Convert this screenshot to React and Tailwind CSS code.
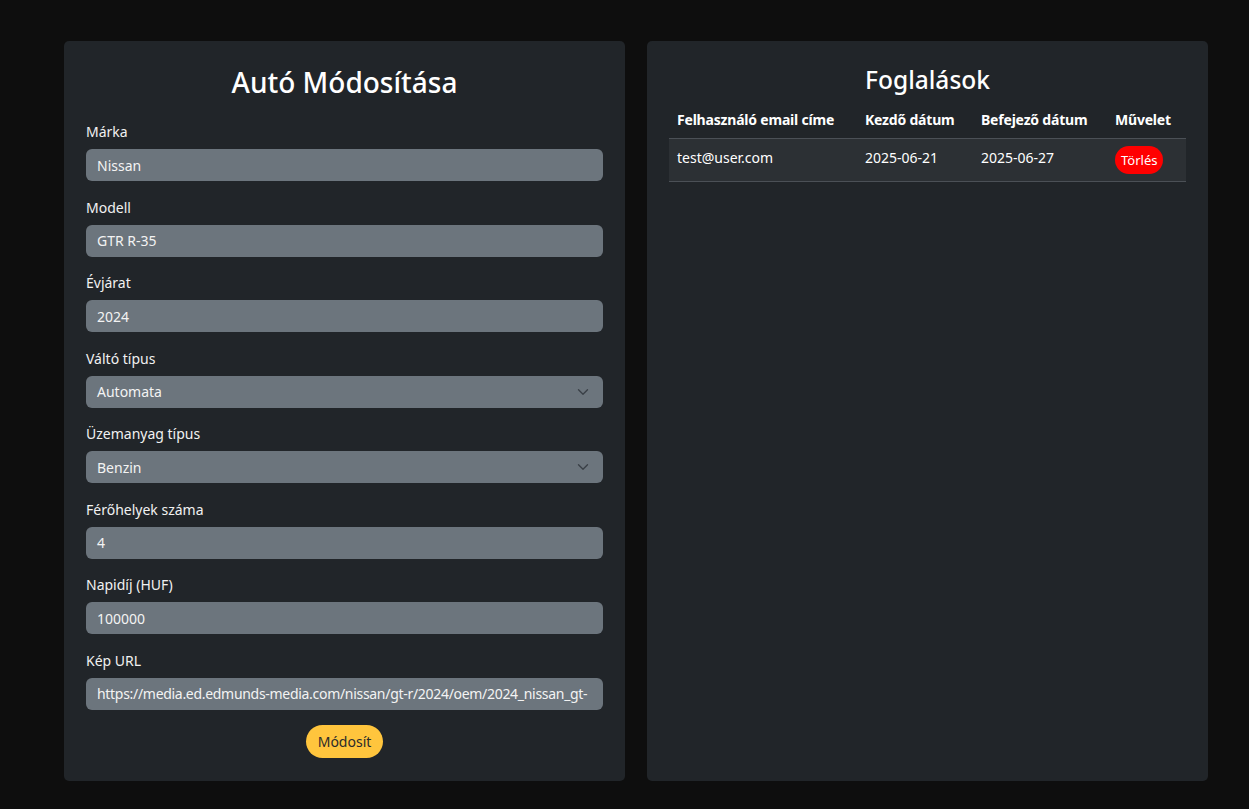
import React from 'react';

const fields = [
  { label: 'Márka', value: 'Nissan' },
  { label: 'Modell', value: 'GTR R-35' },
  { label: 'Évjárat', value: '2024' },
  { label: 'Váltó típus', value: 'Automata', select: true },
  { label: 'Üzemanyag típus', value: 'Benzin', select: true },
  { label: 'Férőhelyek száma', value: '4' },
  { label: 'Napidíj (HUF)', value: '100000' },
  { label: 'Kép URL', value: 'https://media.ed.edmunds-media.com/nissan/gt-r/2024/oem/2024_nissan_gt-', url: true },
];

const bookings = [
  { email: 'test@user.com', start: '2025-06-21', end: '2025-06-27' },
];

function Chevron() {
  return (
    <svg width="12" height="12" viewBox="0 0 16 16" fill="none" className="absolute right-[14px] top-1/2 -translate-y-1/2">
      <path d="M2 5l6 6 6-6" stroke="#3a4047" strokeWidth="1.8" strokeLinecap="round" strokeLinejoin="round" />
    </svg>
  );
}

function Field({ label, value, select, url }) {
  return (
    <div className="mb-[15.5px]">
      <label className="block text-[14px] leading-[21px] mb-[7px] text-[#f1f1f1]">{label}</label>
      <div className="relative">
        <div
          className={`h-[32px] rounded-[6px] bg-[#6c757d] pl-[11px] flex items-center text-[14px] text-[#f3f3f3] whitespace-nowrap overflow-hidden ${
            url ? 'pr-[8px] tracking-[-0.3px]' : 'pr-[36px]'
          }`}
        >
          {value}
        </div>
        {select && <Chevron />}
      </div>
    </div>
  );
}

export default function App() {
  return (
    <div className="min-h-[809px] bg-[#0e0e0e] pt-[41px] pl-[64px] flex gap-[22px] items-start" style={{ fontFamily: '"Noto Sans", "Open Sans", sans-serif' }}>
      {/* Edit car */}
      <div className="w-[561px] h-[740px] bg-[#212529] rounded-[5px] p-[22px] text-white">
        <h2 className="text-[28px] leading-[38px] font-medium text-center mb-[20px]">Autó Módosítása</h2>
        {fields.map(f => (
          <Field key={f.label} {...f} />
        ))}
        <div className="flex justify-center -mt-[0.5px]">
          <button className="h-[33px] px-[12px] rounded-full bg-[#ffc53d] text-[#2b2b2b] text-[14px]">Módosít</button>
        </div>
      </div>

      {/* Bookings */}
      <div className="w-[561px] h-[740px] bg-[#212529] rounded-[5px] p-[22px] text-white">
        <h3 className="text-[24.5px] leading-[34px] font-medium text-center mb-[4px]">Foglalások</h3>
        <table className="w-full text-[14px] leading-[21px] border-collapse">
          <thead>
            <tr className="border-b border-[#4b5056]">
              <th className="w-[188px] p-[8px] text-left font-bold tracking-[-0.2px]">Felhasználó email címe</th>
              <th className="w-[116px] p-[8px] text-left font-bold tracking-[-0.2px]">Kezdő dátum</th>
              <th className="w-[134px] p-[8px] text-left font-bold tracking-[-0.2px]">Befejező dátum</th>
              <th className="p-[8px] text-left font-bold tracking-[-0.2px]">Művelet</th>
            </tr>
          </thead>
          <tbody>
            {bookings.map(b => (
              <tr key={b.email} className="bg-[#2c3034] border-b border-[#4b5056]">
                <td className="px-[8px] pt-[8px] pb-[7px] align-top">{b.email}</td>
                <td className="px-[8px] pt-[8px] pb-[7px] align-top">{b.start}</td>
                <td className="px-[8px] pt-[8px] pb-[7px] align-top">{b.end}</td>
                <td className="px-[8px] pt-[7px] pb-[7px] align-top">
                  <button className="h-[28px] px-[6px] rounded-full bg-[#ff0000] text-white text-[13px]">Törlés</button>
                </td>
              </tr>
            ))}
          </tbody>
        </table>
      </div>
    </div>
  );
}
